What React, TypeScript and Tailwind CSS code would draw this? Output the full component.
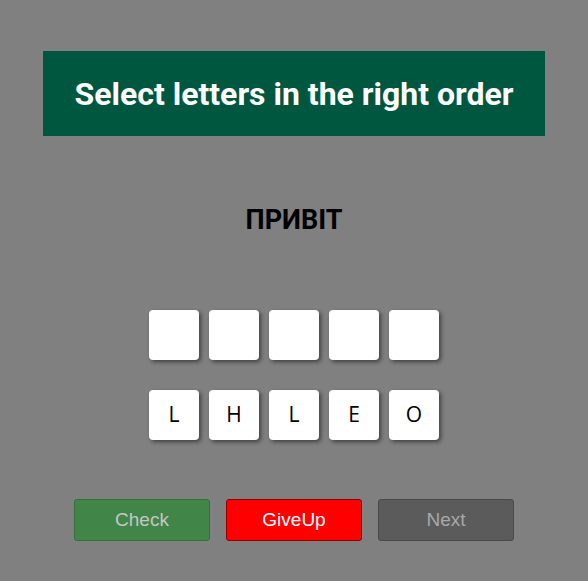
const TILE = "w-[50px] h-[50px] bg-white rounded-[4px] shadow-[2px_2px_4px_rgba(0,0,0,0.5)] flex items-center justify-center text-[21px] text-black";

const App = () => {
  const picked = ["", "", "", "", ""];
  const letters = ["L", "H", "L", "E", "O"];

  return (
    <div className="w-full min-h-[581px] bg-[#808080] flex flex-col items-center pt-[51px]">
      {/* Header */}
      <div className="w-[502px] h-[85px] bg-[#005740] flex items-center justify-center">
        <h1 className="text-white text-[32px] font-bold font-['Roboto',sans-serif] leading-none">
          Select letters in the right order
        </h1>
      </div>

      {/* Word */}
      <div className="mt-[69px] h-[30px] leading-[30px] text-[27px] font-bold text-black font-['Roboto',sans-serif]">
        ПРИВІТ
      </div>

      {/* Answer slots */}
      <div className="mt-[75px] flex gap-[10px]">
        {picked.map((l, i) => (
          <div key={i} className={TILE}>
            {l}
          </div>
        ))}
      </div>

      {/* Letters */}
      <div className="mt-[30px] flex gap-[10px] font-['Open_Sans',sans-serif]">
        {letters.map((l, i) => (
          <div key={i} className={TILE}>
            {l}
          </div>
        ))}
      </div>

      {/* Buttons */}
      <div className="mt-[59px] flex gap-[16px] font-['Liberation_Sans',Arial,sans-serif] text-[19px]">
        <button className="w-[136px] h-[42px] rounded-[3px] bg-[#428548] border border-[#35703b] text-[#c4c8c4]">
          Check
        </button>
        <button className="w-[136px] h-[42px] rounded-[3px] bg-[#ff0000] border border-[#8b0000] text-white">
          GiveUp
        </button>
        <button className="w-[136px] h-[42px] rounded-[3px] bg-[#5b5b5b] border border-[#4a4a4a] text-[#a8a8a8]">
          Next
        </button>
      </div>
    </div>
  );
};

export default App;
